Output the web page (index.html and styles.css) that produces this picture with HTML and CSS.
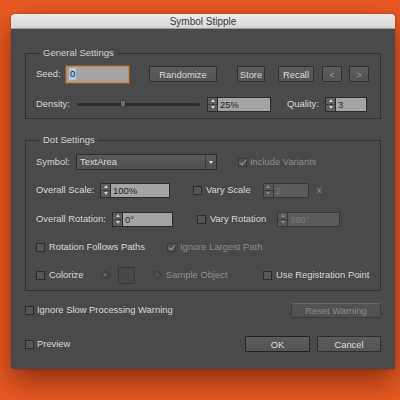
FILE: index.html
```html
<!DOCTYPE html>
<html>
<head>
<meta charset="utf-8">
<link rel="stylesheet" href="styles.css">
</head>
<body>
<div class="win">
  <div class="titlebar">Symbol Stipple</div>
  <div class="content">
    <fieldset class="group general">
      <legend>General Settings</legend>
      <div class="row row-seed">
        <span class="lbl w-seed">Seed:</span>
        <span class="field seed"><span class="sel">0</span></span>
        <span class="btn b-rand">Randomize</span>
        <span class="btn b-store">Store</span>
        <span class="btn b-recall">Recall</span>
        <span class="btn b-prev">&lt;</span>
        <span class="btn b-next">&gt;</span>
      </div>
      <div class="row row-density">
        <span class="lbl w-density">Density:</span>
        <span class="slider"><span class="thumb"></span></span>
        <span class="spin s-density"><span class="up"></span><span class="dn"></span></span>
        <span class="field f-density">25%</span>
        <span class="lbl w-quality">Quality:</span>
        <span class="spin"><span class="up"></span><span class="dn"></span></span>
        <span class="field f-quality">3</span>
      </div>
    </fieldset>

    <fieldset class="group dot">
      <legend>Dot Settings</legend>
      <div class="row row-symbol">
        <span class="lbl w-symbol">Symbol:</span>
        <span class="dropdown"><span class="dd-text">TextArea</span><span class="dd-arrow"></span></span>
        <span class="cb checked disabled c-variants"></span>
        <span class="lbl dim">Include Variants</span>
      </div>
      <div class="row row-scale">
        <span class="lbl w-scale">Overall Scale:</span>
        <span class="spin"><span class="up"></span><span class="dn"></span></span>
        <span class="field f-scale">100%</span>
        <span class="cb c-vscale"></span>
        <span class="lbl">Vary Scale</span>
        <span class="spin disabled s-vscale"><span class="up"></span><span class="dn"></span></span>
        <span class="field disabled f-vscale">2</span>
        <span class="lbl dim x-mark">x</span>
      </div>
      <div class="row row-rot">
        <span class="lbl w-rot">Overall Rotation:</span>
        <span class="spin"><span class="up"></span><span class="dn"></span></span>
        <span class="field f-rot">0°</span>
        <span class="cb c-vrot"></span>
        <span class="lbl">Vary Rotation</span>
        <span class="spin disabled s-vrot"><span class="up"></span><span class="dn"></span></span>
        <span class="field disabled f-vrot">360°</span>
      </div>
      <div class="row row-follow">
        <span class="cb"></span>
        <span class="lbl w-follow">Rotation Follows Paths</span>
        <span class="cb checked disabled"></span>
        <span class="lbl dim">Ignore Largest Path</span>
      </div>
      <div class="row row-color">
        <span class="cb"></span>
        <span class="lbl w-colorize">Colorize</span>
        <span class="radio on disabled"></span>
        <span class="swatch"></span>
        <span class="radio disabled r-sample"></span>
        <span class="lbl dim w-sample">Sample Object</span>
        <span class="cb"></span>
        <span class="lbl">Use Registration Point</span>
      </div>
    </fieldset>

    <div class="row row-warn">
      <span class="cb"></span>
      <span class="lbl">Ignore Slow Processing Warning</span>
      <span class="btn disabled b-reset">Reset Warning</span>
    </div>
    <div class="row row-bottom">
      <span class="cb"></span>
      <span class="lbl">Preview</span>
      <span class="btn b-ok">OK</span>
      <span class="btn b-cancel">Cancel</span>
    </div>
  </div>
</div>
</body>
</html>
```

FILE: styles.css
```css
html, body {
  margin: 0;
  padding: 0;
}
body {
  width: 400px;
  height: 400px;
  overflow: hidden;
  background: #ea5a22;
  font-family: "Liberation Sans", Arial, sans-serif;
  font-size: 9.4px;
  color: #d8d8d8;
}
.win {
  margin: 14px 0 0 11px;
  width: 384px;
  height: 355px;
  background: #4a4a4a;
  border-radius: 4px 4px 2px 2px;
  box-shadow: 0 12px 28px rgba(60, 10, 0, 0.55), 0 0 2px rgba(0,0,0,0.3);
  overflow: hidden;
}
.titlebar {
  height: 15px;
  line-height: 15px;
  text-align: center;
  font-size: 10px;
  color: #3a3a3a;
  background: linear-gradient(#ececec, #d6d6d6);
  border-bottom: 1px solid #9a9a9a;
  box-sizing: border-box;
}
.content {
  padding: 18px 14px 0 14px;
}
.group {
  margin: 0;
  border: 1px solid #313131;
  padding: 0 0 0 10px;
  min-width: 0;
}
.group legend {
  margin-left: 4px;
  padding: 0 3px;
  height: 12px;
  line-height: 12px;
  font-size: 9.5px;
  color: #d4d4d4;
}
.general {
  padding-bottom: 5px;
}
.dot {
  margin-top: 15px;
  padding-bottom: 6px;
}
.row {
  display: flex;
  align-items: center;
  height: 18px;
  white-space: nowrap;
}
.lbl {
  display: inline-block;
  line-height: 12px;
}
.lbl.dim { color: #8e8e8e; }

.row-seed { margin-top: 6px; }
.row-density { margin-top: 12px; }
.w-seed { width: 30px; }
.w-density { width: 41px; }
.w-quality { width: 38px; margin-left: 16px; }

.field {
  display: inline-flex;
  align-items: center;
  box-sizing: border-box;
  height: 15px;
  background: #a4a4a4;
  border: 1px solid #2c2c2c;
  color: #1c1c1c;
  padding-left: 2px;
}
.field.disabled {
  background: #5b5b5b;
  border-color: #383838;
  color: #7c7c7c;
}
.seed {
  width: 63px;
  height: 17px;
  border: 1px solid #d7812f;
  box-shadow: 0 0 0 1px rgba(215, 129, 47, 0.35);
}
.sel {
  background: #a9c8ef;
  padding: 0 1px;
  line-height: 12px;
}

.btn {
  display: inline-flex;
  align-items: center;
  justify-content: center;
  box-sizing: border-box;
  height: 16px;
  background: linear-gradient(#5c5c5c, #545454);
  border: 1px solid #2f2f2f;
  border-radius: 1px;
  color: #dcdcdc;
}
.btn.disabled {
  background: #525252;
  border-color: #3c3c3c;
  border-top-color: #666;
  color: #8a8a8a;
}
.b-rand { width: 68px; margin-left: 20px; }
.b-store { width: 28px; margin-left: 20px; }
.b-recall { width: 36px; margin-left: 13px; }
.b-prev { width: 20px; margin-left: 8px; color: #9a9a9a; }
.b-next { width: 20px; margin-left: 7px; color: #9a9a9a; }

.slider {
  position: relative;
  width: 123px;
  height: 3px;
  background: #2f2f2f;
  border-radius: 1px;
}
.thumb {
  position: absolute;
  left: 43px;
  top: -3px;
  width: 6px;
  height: 7px;
  background: #6e6e6e;
  border: 1px solid #2a2a2a;
  box-sizing: border-box;
  clip-path: polygon(50% 0, 100% 35%, 100% 100%, 0 100%, 0 35%);
}

.spin {
  display: inline-flex;
  flex-direction: column;
  box-sizing: border-box;
  width: 10px;
  height: 15px;
  background: #5e5e5e;
  border: 1px solid #2c2c2c;
  border-right: none;
}
.spin .up, .spin .dn {
  flex: 1;
  display: flex;
  align-items: center;
  justify-content: center;
}
.spin .up { border-bottom: 1px solid #3e3e3e; }
.spin .up::after {
  content: "";
  border-left: 2.5px solid transparent;
  border-right: 2.5px solid transparent;
  border-bottom: 3px solid #cfcfcf;
}
.spin .dn::after {
  content: "";
  border-left: 2.5px solid transparent;
  border-right: 2.5px solid transparent;
  border-top: 3px solid #cfcfcf;
}
.spin.disabled { background: #585858; border-color: #383838; }
.spin.disabled .up::after { border-bottom-color: #858585; }
.spin.disabled .dn::after { border-top-color: #858585; }

.s-density { margin-left: 7px; }
.f-density { width: 54px; }
.f-quality { width: 32px; }

.row-symbol { margin-top: 7px; }
.w-symbol { width: 40px; }
.dropdown {
  display: inline-flex;
  box-sizing: border-box;
  width: 141px;
  height: 16px;
  background: linear-gradient(#5a5a5a, #505050);
  border: 1px solid #2e2e2e;
  color: #dcdcdc;
}
.dd-text {
  flex: 1;
  padding-left: 3px;
  line-height: 14px;
  border-right: 1px solid #3a3a3a;
}
.dd-arrow {
  width: 10px;
  display: flex;
  align-items: center;
  justify-content: center;
}
.dd-arrow::after {
  content: "";
  border-left: 2.5px solid transparent;
  border-right: 2.5px solid transparent;
  border-top: 3px solid #e0e0e0;
}

.cb {
  display: inline-block;
  position: relative;
  box-sizing: border-box;
  width: 9px;
  height: 9px;
  background: #565656;
  border: 1px solid #2c2c2c;
  margin-right: 4px;
}
.cb.checked::after {
  content: "";
  position: absolute;
  left: 2px;
  top: -1px;
  width: 3px;
  height: 6px;
  border-right: 1px solid #9a9a9a;
  border-bottom: 1px solid #9a9a9a;
  transform: rotate(40deg);
}
.cb.disabled { background: #505050; border-color: #3a3a3a; }

.c-variants { margin-left: 21px; margin-right: 3px; }

.row-scale { margin-top: 10px; }
.row-rot { margin-top: 11px; }
.row-follow { margin-top: 10px; }
.row-color { margin-top: 10px; }
.w-scale { width: 64px; }
.f-scale { width: 60px; }
.c-vscale { margin-left: 23px; }
.s-vscale { margin-left: 12px; }
.f-vscale { width: 36px; }
.x-mark { margin-left: 8px; }
.w-rot { width: 76px; }
.f-rot { width: 51px; }
.c-vrot { margin-left: 24px; }
.s-vrot { margin-left: 11px; }
.f-vrot { width: 53px; }
.w-follow { width: 118px; }
.w-colorize { width: 52px; }

.radio {
  display: inline-block;
  position: relative;
  box-sizing: border-box;
  width: 8px;
  height: 8px;
  border-radius: 50%;
  border: 1px solid #3a3a3a;
  background: #4e4e4e;
}
.radio.on::after {
  content: "";
  position: absolute;
  left: 2px;
  top: 2px;
  width: 2px;
  height: 2px;
  border-radius: 50%;
  background: #7a7a7a;
}
.swatch {
  display: inline-block;
  box-sizing: border-box;
  width: 17px;
  height: 17px;
  margin-left: 9px;
  border: 1px dotted #262626;
  background: #474747;
}
.r-sample { margin-left: 18px; margin-right: 5px; }
.w-sample { width: 97px; }

.row-warn { margin-top: 10px; }
.row-warn .lbl { width: 254px; }
.b-reset { width: 90px; height: 15px; }
.row-bottom { margin-top: 16px; }
.row-bottom .lbl { width: 208px; }
.b-ok { width: 65px; border-color: #242424; }
.b-cancel { width: 64px; margin-left: 7px; }
.row-warn .cb, .row-bottom .cb { margin-right: 3px; }
```
